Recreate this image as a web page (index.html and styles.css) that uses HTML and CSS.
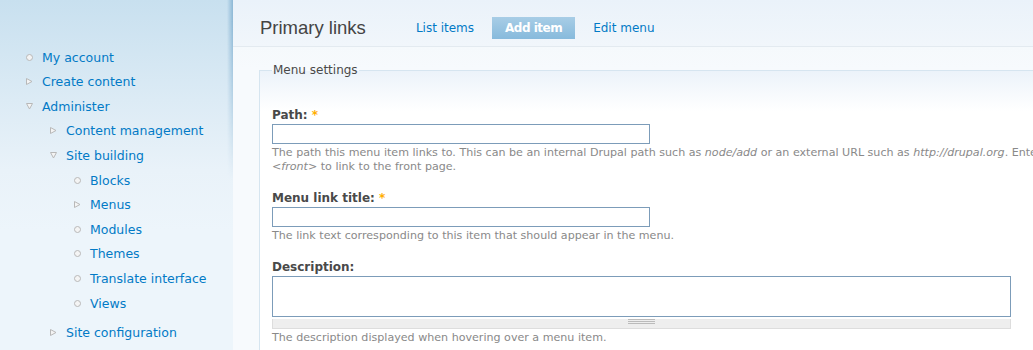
FILE: index.html
```html
<!doctype html>
<html lang="en">

<head>
    <meta charset="UTF-8" />
    <meta name="viewport" content="width=device-width, initial-scale=1.0" />
    <title>Primary links</title>
    <link rel="stylesheet" href="styles.css">
</head>

<body>
    <svg class="defs" width="0" height="0" aria-hidden="true">
        <defs>
            <g id="leaf">
                <circle cx="3.5" cy="3.5" r="3" fill="#f4f4f4" stroke="#b8b8b8" />
            </g>
            <g id="collapsed">
                <polygon points="0.5,0.5 6,3.5 0.5,6.5" fill="#f4f4f4" stroke="#b8b8b8" />
            </g>
            <g id="expanded">
                <polygon points="0.5,0.5 6.5,0.5 3.5,6" fill="#f4f4f4" stroke="#b8b8b8" />
            </g>
        </defs>
    </svg>

    <div class="sidebar">
        <ul class="menu">
            <li><svg class="bullet"><use href="#leaf" /></svg><a href="#">My account</a></li>
            <li><svg class="bullet"><use href="#collapsed" /></svg><a href="#">Create content</a></li>
            <li><svg class="bullet"><use href="#expanded" /></svg><a href="#">Administer</a>
                <ul class="menu">
                    <li><svg class="bullet"><use href="#collapsed" /></svg><a href="#">Content management</a></li>
                    <li><svg class="bullet"><use href="#expanded" /></svg><a href="#">Site building</a>
                        <ul class="menu">
                            <li><svg class="bullet"><use href="#leaf" /></svg><a href="#">Blocks</a></li>
                            <li><svg class="bullet"><use href="#collapsed" /></svg><a href="#">Menus</a></li>
                            <li><svg class="bullet"><use href="#leaf" /></svg><a href="#">Modules</a></li>
                            <li><svg class="bullet"><use href="#leaf" /></svg><a href="#">Themes</a></li>
                            <li><svg class="bullet"><use href="#leaf" /></svg><a href="#">Translate interface</a></li>
                            <li><svg class="bullet"><use href="#leaf" /></svg><a href="#">Views</a></li>
                        </ul>
                    </li>
                    <li><svg class="bullet"><use href="#collapsed" /></svg><a href="#">Site configuration</a></li>
                </ul>
            </li>
        </ul>
    </div>

    <div class="main">
        <div class="page-header">
            <h2 class="page-title">Primary links</h2>
            <ul class="tabs">
                <li><a href="#">List items</a></li>
                <li class="active"><a href="#">Add item</a></li>
                <li><a href="#">Edit menu</a></li>
            </ul>
        </div>

        <form class="menu-form">
            <fieldset>
                <legend>Menu settings</legend>

                <div class="form-item">
                    <label for="path">Path: <span class="required">*</span></label>
                    <input type="text" id="path" class="form-text" />
                    <div class="description">The path this menu item links to. This can be an internal Drupal path such as <em>node/add</em> or an external URL such as <em>http://drupal.org</em>. Enter<br><em>&lt;front&gt;</em> to link to the front page.</div>
                </div>

                <div class="form-item">
                    <label for="link-title">Menu link title: <span class="required">*</span></label>
                    <input type="text" id="link-title" class="form-text" />
                    <div class="description">The link text corresponding to this item that should appear in the menu.</div>
                </div>

                <div class="form-item">
                    <label for="description">Description:</label>
                    <div class="resizable">
                        <textarea id="description"></textarea>
                        <div class="grippie"></div>
                    </div>
                    <div class="description">The description displayed when hovering over a menu item.</div>
                </div>
            </fieldset>
        </form>
    </div>
</body>

</html>
```

FILE: styles.css
```css
body {
    font-family: "DejaVu Sans", Verdana, sans-serif;
    font-size: 12px;
    color: #494949;
    margin: 0;
    display: flex;
    height: 350px;
    overflow: hidden;
}

a {
    color: #027ac6;
    text-decoration: none;
}

.defs {
    position: absolute;
}

/* left sidebar */

.sidebar {
    position: relative;
    width: 233px;
    flex-shrink: 0;
    padding-top: 42px;
    box-sizing: border-box;
    background: linear-gradient(#c8e0ef 0, #dcebf5 100px, #e9f2f9 170px, #edf5fb 230px);
}

.sidebar::after {
    content: "";
    position: absolute;
    top: 0;
    right: 0;
    width: 6px;
    height: 180px;
    background: linear-gradient(to right, rgba(140, 185, 215, 0), rgba(120, 170, 205, 0.75));
    -webkit-mask-image: linear-gradient(#000 20px, transparent);
    mask-image: linear-gradient(#000 20px, transparent);
}

.menu {
    list-style: none;
    margin: 0;
    padding: 0 0 0 26px;
    font-size: 12.5px;
}

.menu .menu {
    padding-left: 24px;
    margin-bottom: 4.4px;
}

.menu li {
    padding-top: 6.6px;
    line-height: 18px;
}

.bullet {
    width: 7px;
    height: 7px;
    margin-right: 9px;
    vertical-align: 1px;
}

/* page header with tabs */

.main {
    flex: 1;
    min-width: 0;
    background: linear-gradient(#eaf2fa 0, #f1f6fb 46px, #f5f9fc 47px, #f7fafd 69px);
}

.page-header {
    display: flex;
    align-items: center;
    height: 36px;
    padding: 10px 0 0 27px;
    border-bottom: 1px solid #e3eaf0;
}

.page-title {
    font-family: "Liberation Sans", Arial, sans-serif;
    font-size: 18.5px;
    font-weight: normal;
    color: #444;
    margin: 0 37px 0 0;
}

.tabs {
    display: flex;
    gap: 5px;
    list-style: none;
    margin: 0;
    padding: 0;
}

.tabs a {
    display: block;
    padding: 0 13px;
    height: 22px;
    line-height: 22px;
}

.tabs .active a {
    color: #fff;
    font-weight: bold;
    letter-spacing: -0.5px;
    background: linear-gradient(#a8cde6, #87badc);
}

/* form */

.menu-form {
    margin: 15px 0 0 26px;
}

fieldset {
    width: 900px;
    margin: 0;
    padding: 28px 12px 0;
    border: 1px solid #d6e5f0;
    background: linear-gradient(#ecf3fa 0, #fff 40px);
}

legend {
    padding: 0 1px;
    line-height: 16px;
    font-size: 12px;
    color: #494949;
}

.form-item {
    margin-bottom: 15px;
}

.form-item label {
    display: block;
    font-weight: bold;
    line-height: 18px;
}

.required {
    color: #ffae00;
}

.form-text {
    display: block;
    width: 378px;
    height: 20px;
    margin: 0;
    padding: 0 3px;
    box-sizing: border-box;
    border: 1px solid #7c9cb9;
    font-family: inherit;
}

.description {
    margin-top: 2px;
    font-size: 11.1px;
    line-height: 14px;
    color: #898989;
    white-space: nowrap;
}

.resizable {
    width: 739px;
}

.resizable textarea {
    display: block;
    width: 100%;
    height: 41px;
    margin: 0;
    box-sizing: border-box;
    border: 1px solid #7c9cb9;
    resize: none;
    font-family: inherit;
}

.grippie {
    height: 10px;
    box-sizing: border-box;
    background: #eee;
    border: 1px solid #ddd;
    border-top: 0;
}

.grippie::before {
    content: "";
    display: block;
    width: 27px;
    height: 5px;
    margin: 2px auto 0;
    border-top: 1px solid #bbb;
    border-bottom: 1px solid #bbb;
    box-sizing: border-box;
    background: linear-gradient(#bbb, #bbb) center / 100% 1px no-repeat;
}
```
